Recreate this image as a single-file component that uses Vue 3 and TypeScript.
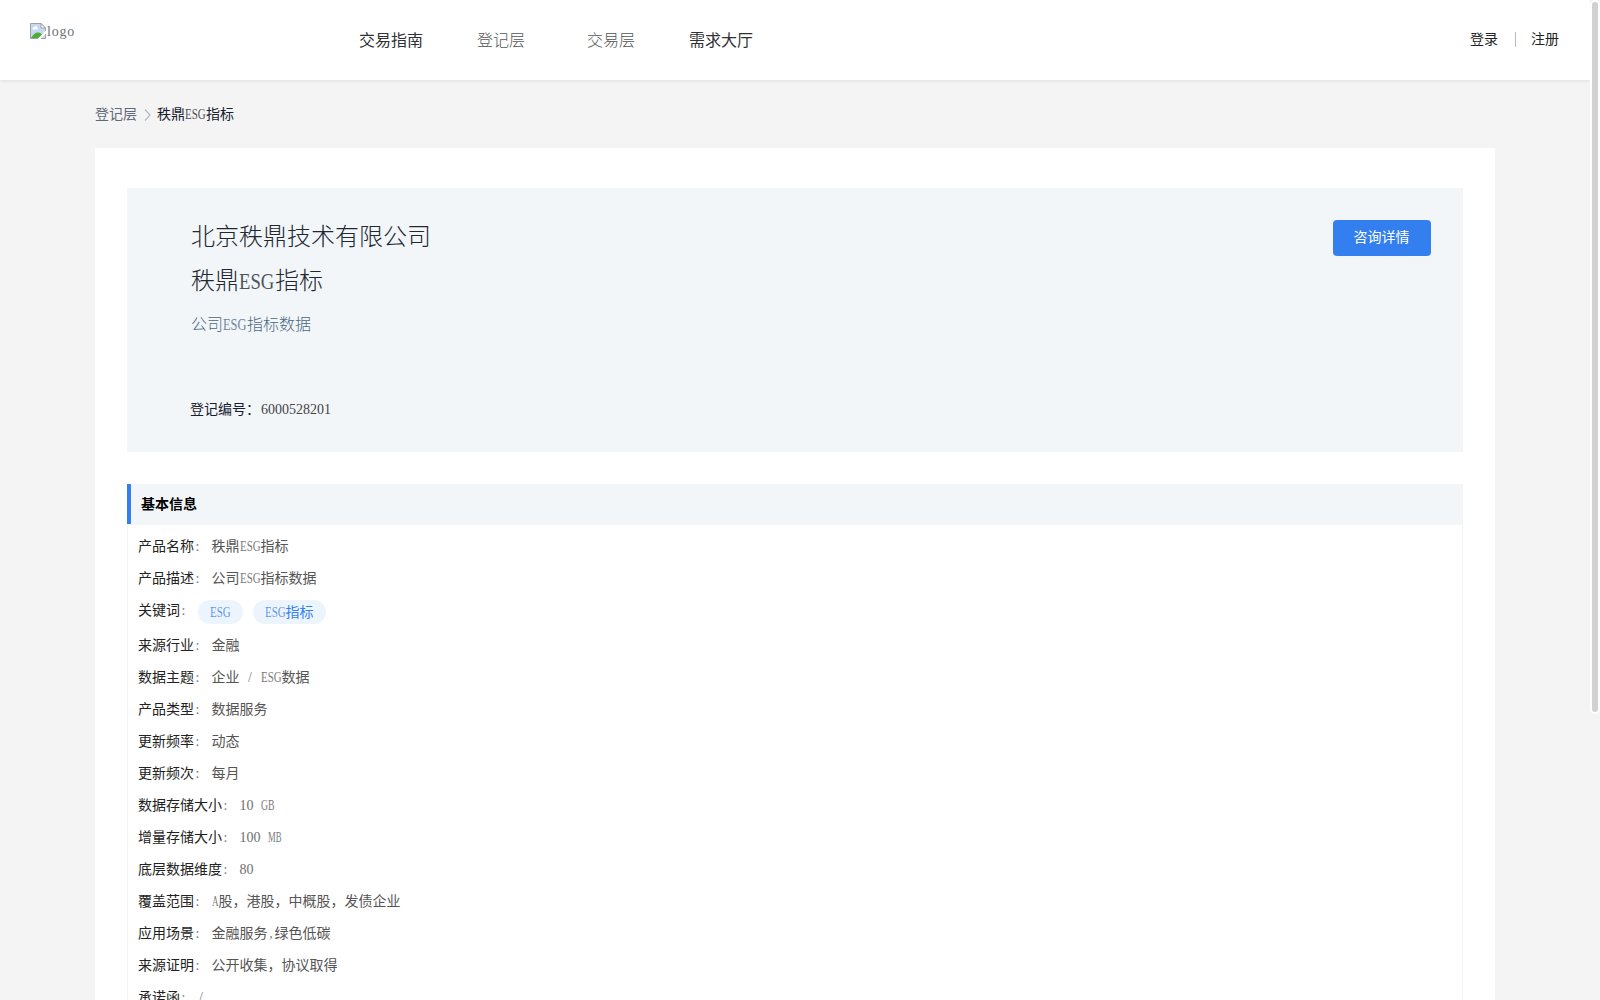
<script setup lang="ts">
interface Row { label: string; value?: string; tags?: string[] }

const nav = [
  { text: '交易指南', soft: false },
  { text: '登记层', soft: true },
  { text: '交易层', soft: true },
  { text: '需求大厅', soft: false },
]

const rows: Row[] = [
  { label: '产品名称', value: '秩鼎ESG指标' },
  { label: '产品描述', value: '公司ESG指标数据' },
  { label: '关键词', tags: ['ESG', 'ESG指标'] },
  { label: '来源行业', value: '金融' },
  { label: '数据主题', value: '企业 / ESG数据' },
  { label: '产品类型', value: '数据服务' },
  { label: '更新频率', value: '动态' },
  { label: '更新频次', value: '每月' },
  { label: '数据存储大小', value: '10 GB' },
  { label: '增量存储大小', value: '100 MB' },
  { label: '底层数据维度', value: '80' },
  { label: '覆盖范围', value: 'A股，港股，中概股，发债企业' },
  { label: '应用场景', value: '金融服务,绿色低碳' },
  { label: '来源证明', value: '公开收集，协议取得' },
  { label: '承诺函', value: '/' },
]

// Splits a text into runs so that Latin capitals, commas and slashes can be set at half width.
const runs = (s: string): string[] => s.split(/([A-Z]+|[,/]|[0-9]+)/).filter(Boolean)
const kind = (s: string): string =>
  /^[A-Z]+$/.test(s) ? 'caps' : /^[,/]$/.test(s) ? 'half' : /^[0-9]+$/.test(s) ? 'num' : ''

// Natural widths of the capitals in em, for condensing a run to half an em per letter.
const em: Record<string, number> = { A: 0.722, B: 0.667, E: 0.611, G: 0.722, M: 0.889, S: 0.556 }
const fit = (s: string) => {
  if (kind(s) !== 'caps') return undefined
  const natural = [...s].reduce((sum, c) => sum + (em[c] ?? 0.66), 0)
  const width = s.length * 0.5
  return { width: `${width}em`, transform: `scaleX(${((width - 0.03) / natural).toFixed(3)})` }
}
</script>

<template>
  <div class="page">
    <header class="header">
      <div class="logo">
        <svg width="16" height="16" viewBox="0 0 16 16">
          <path d="M.5 .5H11L15.500 5V15.500H.5Z" fill="#c6d8f7" stroke="#a0a0a0" />
          <path d="M11 .5V5H15.500Z" fill="#fff" stroke="#a0a0a0" />
          <path d="M3 6.500a1.500 1.500 0 0 1 1-2.500a2 2 0 0 1 3.500 1a1 1 0 0 1 0 1.500Z" fill="#fff" />
          <path d="M1 15C3 11 6 9 9 9.500L12 11V15Z" fill="#4caf32" />
          <path d="M7.500 16L16 7.500V10.500L10.500 16Z" fill="#fff" />
        </svg>
        <span>logo</span>
      </div>
      <nav class="nav">
        <a v-for="n in nav" :key="n.text" :class="{ soft: n.soft }">{{ n.text }}</a>
      </nav>
      <div class="account"><a>登录</a><i></i><a>注册</a></div>
    </header>

    <main class="main">
      <div class="crumbs">
        <span>登记层</span>
        <svg width="14" height="14" viewBox="0 0 14 14"><path d="M4 1.500L9 7L4 12.500" fill="none" stroke="#b4b8c0" stroke-width="1.200" /></svg>
        <b>秩鼎<span class="caps" :style="fit('ESG')">ESG</span>指标</b>
      </div>

      <div class="card">
        <section class="hero">
          <div class="info">
            <h1>北京秩鼎技术有限公司</h1>
            <h1>秩鼎<span class="caps" :style="fit('ESG')">ESG</span>指标</h1>
            <p class="desc">公司<span class="caps" :style="fit('ESG')">ESG</span>指标数据</p>
            <p class="code">登记编号：<span>6000528201</span></p>
          </div>
          <button>咨询详情</button>
        </section>

        <section class="basic">
          <h2>基本信息</h2>
          <div class="rows">
            <div v-for="r in rows" :key="r.label" class="row" :class="{ tagged: r.tags }">
              <span class="label">{{ r.label }}<i>:</i></span>
              <span v-if="r.value" class="value"><span v-for="(p, i) in runs(r.value)" :key="i" :class="kind(p)" :style="fit(p)">{{ p }}</span></span>
              <template v-else>
                <span v-for="t in r.tags" :key="t" class="tag"><span v-for="(p, i) in runs(t)" :key="i" :class="kind(p)" :style="fit(p)">{{ p }}</span></span>
              </template>
            </div>
          </div>
        </section>
      </div>
    </main>
    <div class="thumb"></div>
  </div>
</template>

<style>
body { margin: 0; overflow: hidden; }
</style>

<style scoped>
* { box-sizing: border-box; }
.page { position: relative; height: 1000px; overflow: hidden; background: #f4f4f4; padding-right: 10px; font: 400 14px/22px "Liberation Serif", "Noto Sans CJK SC", serif; color: #17202e; white-space: nowrap; }
h1, h2, p { margin: 0; font-weight: inherit; }
i { font-style: normal; }
.caps { display: inline-block; transform-origin: 0 50%; opacity: .78; line-height: 1; }
.num { opacity: .85; }
.half { display: inline-block; width: .5em; line-height: 1; text-align: center; opacity: .75; }
.header { position: relative; display: flex; height: 80px; background: #fff; box-shadow: 0 1px 4px rgba(0, 0, 0, .09); color: #303133; }
.logo { display: flex; flex: none; width: 359px; padding: 23px 0 0 30px; color: #707276; }
.logo span { line-height: 17px; padding-left: 1px; letter-spacing: .8px; }
.nav { display: flex; font-size: 16px; line-height: 81px; gap: 54px; }
.nav a:nth-child(3) { margin-left: 8px; }
.nav .soft { color: #555; font-weight: 300; }
.account { display: flex; align-items: center; height: 80px; margin-left: auto; padding-right: 31px; color: #222; }
.account i { width: 1px; height: 15px; margin: 0 15px 1px 17px; background: #bbb; }
.main { width: 1400px; margin: 0 auto; }
.crumbs { display: flex; align-items: center; height: 68px; padding-top: 1px; color: #606879; }
.crumbs svg { margin: 0 3px 0 4px; }
.crumbs b { font-weight: 400; color: #17202e; margin-left: -1px; }
.card { height: 852px; padding: 40px 32px 0; background: #fff; }
.hero { display: flex; justify-content: space-between; height: 264px; padding: 32px 32px 0 64px; background: #f2f6f9; }
h1 { font-size: 24px; font-weight: 300; line-height: 34px; margin-bottom: 10px; color: #222832; }
.desc { margin-top: 15px; font-size: 16px; line-height: 24px; font-weight: 300; color: #4d6784; }
.code { margin-top: 61px; line-height: 24px; margin-left: -1px; }
.code span { margin-left: 1px; color: #444; }
button { width: 98px; height: 36px; padding: 0 1px 0 0; border: 0; border-radius: 4px; background: #347fef; color: #fff; font: inherit; }
.basic { margin-top: 32px; }
h2 { height: 41px; padding-left: 14px; line-height: 41px; font-size: 14px; font-weight: 700; color: #000; background: linear-gradient(#347fef, #347fef) 0 0 / 4px 40px no-repeat #f2f6f9; }
.rows { height: 475px; padding: 6px 10px 0; border: solid #f2f4f7; border-width: 0 1px; }
.row { display: flex; height: 32px; line-height: 32px; color: #555; }
.tagged { height: 35px; }
.label { margin-right: 10.500px; color: #222; }
.label i { display: inline-block; width: 7px; text-align: center; color: #777; line-height: 1; }
.value { word-spacing: .25em; }
.tag { height: 24px; margin: 5px 10px 0 0; padding: 0 12px; border-radius: 12px; background: #ecf5fe; color: #347fef; line-height: 25px; }
.tag:first-of-type { margin-left: .5px; }
.thumb { position: absolute; top: 0; right: 0; width: 10px; height: 714px; border: 2px solid #fff; border-radius: 5px; background: #d1d1d1; }
</style>
